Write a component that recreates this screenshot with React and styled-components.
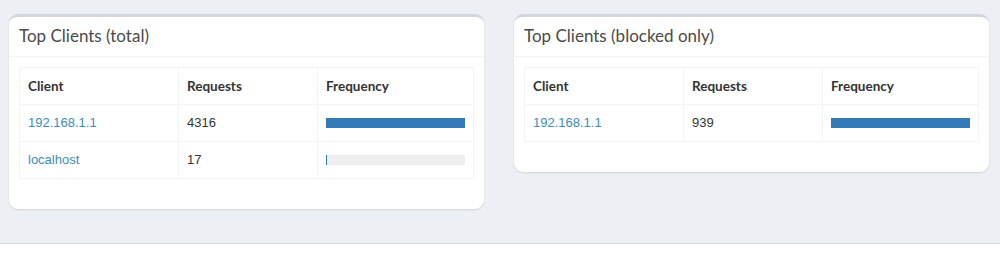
import React from 'react'
import styled, { createGlobalStyle } from 'styled-components'

const GlobalStyle = createGlobalStyle`
  html, body {
    margin: 0;
    padding: 0;
    background: #ecf0f5;
    font-family: "Lato", "Liberation Sans", sans-serif;
  }
`

const Page = styled.div`
  height: 256px;
  display: flex;
  flex-direction: column;
  background: #ecf0f5;
`

const Row = styled.div`
  display: grid;
  grid-template-columns: 475px 475px;
  column-gap: 30px;
  align-items: start;
  padding: 14px 0 0 9px;
  flex: 1;
`

const Box = styled.div`
  background: #fff;
  border-top: 3px solid #d2d6de;
  border-radius: 9px;
  box-shadow: 0 1px 2px rgba(0, 0, 0, 0.12);
`

const BoxHeader = styled.div`
  padding: 7px 10px 8px;
  border-bottom: 1px solid #f4f4f4;
`

const Title = styled.h3`
  margin: 0;
  font-size: 17px;
  font-weight: 400;
  line-height: 24px;
  color: #4a4a4a;
`

const BoxBody = styled.div`
  padding: 10px 10px 30px;
`

const Table = styled.table`
  width: 100%;
  border-collapse: collapse;
  border: 1px solid #f4f4f4;
  font-size: 13px;
  color: #333;

  th, td {
    border: 1px solid #f4f4f4;
    padding: 8px;
    line-height: 20px;
    text-align: left;
    vertical-align: middle;
  }

  th {
    font-weight: 700;
    font-size: 13.5px;
    font-family: "Lato", sans-serif;
    color: #333;
  }

  td {
    font-family: "Liberation Sans", Arial, sans-serif;
  }
`

const ClientLink = styled.a`
  color: #3c8dbc;
  text-decoration: none;
`

const Progress = styled.div`
  height: 10px;
  background: #eeeeee;
  display: flex;
`

const ProgressBar = styled.div`
  background: #337ab7;
  height: 100%;
`

const Footer = styled.footer`
  height: 12px;
  background: #fff;
  border-top: 1px solid #d2d6de;
`

const ClientsTable = ({ rows }) => {
  const max = Math.max(...rows.map(r => r.requests))
  return (
    <Table>
      <colgroup>
        <col style={{ width: '159px' }} />
        <col style={{ width: '139px' }} />
        <col />
      </colgroup>
      <thead>
        <tr>
          <th>Client</th>
          <th>Requests</th>
          <th>Frequency</th>
        </tr>
      </thead>
      <tbody>
        {rows.map(r => (
          <tr key={r.client}>
            <td><ClientLink href="#">{r.client}</ClientLink></td>
            <td>{r.requests}</td>
            <td>
              <Progress>
                <ProgressBar style={{ width: `${Math.max((r.requests / max) * 100, 0.8)}%` }} />
              </Progress>
            </td>
          </tr>
        ))}
      </tbody>
    </Table>
  )
}

const Card = ({ title, rows }) => (
  <Box>
    <BoxHeader>
      <Title>{title}</Title>
    </BoxHeader>
    <BoxBody>
      <ClientsTable rows={rows} />
    </BoxBody>
  </Box>
)

export default function App() {
  return (
    <>
      <GlobalStyle />
      <Page>
        <Row>
          <Card
            title="Top Clients (total)"
            rows={[
              { client: '192.168.1.1', requests: 4316 },
              { client: 'localhost', requests: 17 },
            ]}
          />
          <Card
            title="Top Clients (blocked only)"
            rows={[{ client: '192.168.1.1', requests: 939 }]}
          />
        </Row>
        <Footer />
      </Page>
    </>
  )
}
